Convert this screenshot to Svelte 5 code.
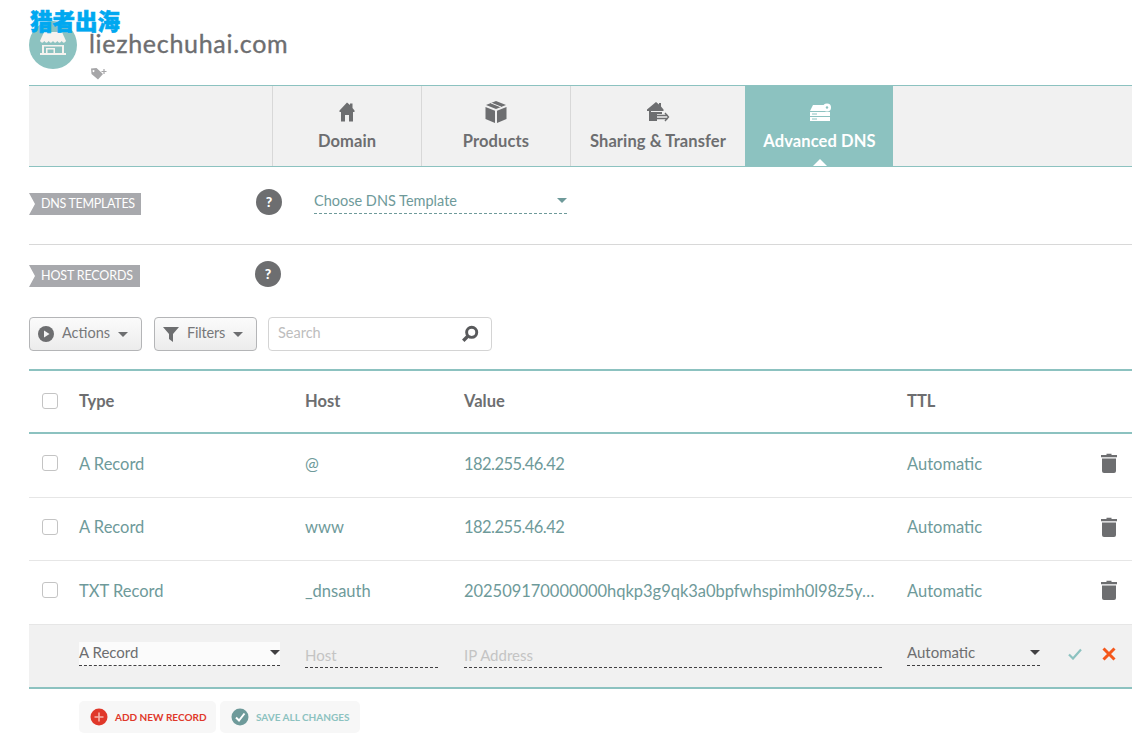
<script>
  const tabs = [
    { label: 'Domain', w: 149, icon: 'home' },
    { label: 'Products', w: 149, icon: 'box' },
    { label: 'Sharing & Transfer', w: 175, icon: 'share' },
    { label: 'Advanced DNS', w: 148, icon: 'dns', active: true }
  ];
  const rows = [
    { type: 'A Record', host: '@', value: '182.255.46.42', ip: true },
    { type: 'A Record', host: 'www', value: '182.255.46.42', ip: true },
    { type: 'TXT Record', host: '_dnsauth', value: '202509170000000hqkp3g9qk3a0bpfwhspimh0l98z5y…', ip: false }
  ];
</script>

<div class="page">
  <div class="brand">猎者出海</div>

  <header class="head">
    <div class="avatar">
      <svg viewBox="0 0 48 48" width="48" height="48">
        <path d="M15 11h18l4 9H11z" fill="#f6f3ef"/>
        <path d="M11 20q2.200 3.500 4.300 0q2.200 3.500 4.400 0q2.100 3.500 4.300 0q2.200 3.500 4.300 0q2.200 3.500 4.400 0q2.100 3.500 4.300 0z" fill="#f6f3ef"/>
        <path d="M13 24h22v8h2v2H11v-2h2zm2 1.500v6.500h2v-5h9v5h7v-6.500zm3.500 3v3.500h6v-3.500z" fill="#f6f3ef" fill-rule="evenodd"/>
      </svg>
    </div>
    <div class="title">
      <h1>liezhechuhai.com</h1>
      <svg class="tag" viewBox="0 0 18 13" width="18" height="13">
        <path fill-rule="evenodd" d="M1 1.500L6.500 1l6.500 6-5 5.500L1.500 7zM3.500 3a1 1 0 1 0 .01 0z" fill="#a6a6a8"/>
        <path d="M14 2v5M11.500 4.500h5" stroke="#a6a6a8" stroke-width="1.200"/>
      </svg>
    </div>
  </header>

  <nav class="tabs">
    {#each tabs as t}
      <div class="tab" class:active={t.active} style="width:{t.w}px">
        <svg viewBox="0 0 24 24" width="24" height="24">
          {#if t.icon === 'home'}
            <path d="M12 2.500l3 2.500V3.500h2.500V8l2 2.500V12H18v9.500h-4V15h-4v6.500H6V12H4.500v-1.500z" fill="#6d6e70"/>
          {:else if t.icon === 'box'}
            <path d="M12 1l10 4-10 4L2 5z M1.500 7l9.500 3.800V23l-9.500-4z M22.500 7L13 10.800V23l9.500-4z" fill="#6d6e70"/>
            <path d="M7 3l10 4" stroke="#f1f1f1" stroke-width="1"/>
          {:else if t.icon === 'share'}
            <path d="M10 2l3 2.500V3h2v3.500l2.500 3V11H5v10H3V11H1V9.500z M5 12h11v2h-5v7H5z" fill="#6d6e70"/>
            <path d="M11 15.500h11M11 18.500h11M19 13l3.500 4-3.500 4" stroke="#6d6e70" stroke-width="1.400" fill="none"/>
          {:else}
            <path d="M5 5h11l2 6H2z" fill="#fff"/>
            <circle cx="19" cy="7.500" r="4" fill="#fff"/>
            <circle cx="19" cy="7.500" r="1.200" fill="#8cc2c0"/>
            <rect x="2" y="12" width="20" height="4" fill="#fff"/>
            <rect x="2" y="17" width="20" height="4" fill="#fff"/>
            <path d="M4 14h5M4 19h5" stroke="#8cc2c0" stroke-width="1"/>
          {/if}
        </svg>
        <span>{t.label}</span>
      </div>
    {/each}
  </nav>

  <section class="band first">
    <div class="ribbon">DNS TEMPLATES</div>
    <div class="help">?</div>
    <div class="choose"><span>Choose DNS Template</span><i class="caret teal"></i></div>
  </section>

  <section class="band second">
    <div class="ribbon narrow">HOST RECORDS</div>
    <div class="help">?</div>
  </section>

  <div class="toolbar">
    <div class="btn actions">
      <svg viewBox="0 0 16 16" width="16" height="16"><circle cx="8" cy="8" r="8" fill="#6d6e70"/><path d="M6 4.500l5.500 3.500L6 11.500z" fill="#f4f4f4"/></svg>
      <span>Actions</span><i class="caret"></i>
    </div>
    <div class="btn filters">
      <svg viewBox="0 0 16 16" width="16" height="16"><path d="M0 1h16L10 8v8l-4-3V8z" fill="#6d6e70"/></svg>
      <span>Filters</span><i class="caret"></i>
    </div>
    <div class="search">
      <span>Search</span>
      <svg viewBox="0 0 16 16" width="18" height="18"><circle cx="9.500" cy="6.500" r="4.500" fill="none" stroke="#58595b" stroke-width="2.600"/><path d="M6 10l-4 4" stroke="#58595b" stroke-width="3"/></svg>
    </div>
  </div>

  <div class="table">
    <div class="row thead">
      <div class="c-check"><b class="box"></b></div>
      <div class="c-type">Type</div>
      <div class="c-host">Host</div>
      <div class="c-value">Value</div>
      <div class="c-ttl">TTL</div>
    </div>
    {#each rows as r}
      <div class="row item">
        <div class="c-check"><b class="box"></b></div>
        <div class="c-type">{r.type}</div>
        <div class="c-host">{r.host}</div>
        <div class="c-value" class:ip={r.ip} class:long={!r.ip}>{r.value}</div>
        <div class="c-ttl">Automatic</div>
        <svg class="trash" viewBox="0 0 16 20" width="16" height="20">
          <path d="M5.500 2V.8h5V2H16v2.200H0V2z" fill="#6d6e70"/>
          <path d="M1 5.500h14V18a2 2 0 0 1-2 2H3a2 2 0 0 1-2-2z" fill="#6d6e70"/>
        </svg>
      </div>
    {/each}
    <div class="row edit">
      <div class="c-check"></div>
      <div class="c-type"><div class="select light"><span>A Record</span><i class="caret dark"></i></div></div>
      <div class="c-host"><div class="input">Host</div></div>
      <div class="c-value"><div class="input">IP Address</div></div>
      <div class="c-ttl"><div class="select"><span>Automatic</span><i class="caret dark"></i></div></div>
      <svg class="ok" viewBox="0 0 14 12" width="14" height="12"><path d="M1 6.500l4 4 8-9" fill="none" stroke="#8cc2c0" stroke-width="2.200"/></svg>
      <svg class="no" viewBox="0 0 14 14" width="14" height="14"><path d="M1.500 1.500l11 11M12.500 1.500l-11 11" fill="none" stroke="#f4581c" stroke-width="3"/></svg>
    </div>
  </div>

  <div class="foot">
    <div class="act add">
      <svg viewBox="0 0 18 18" width="18" height="18"><circle cx="9" cy="9" r="8.500" fill="#e0382a"/><path d="M9 4.500v9M4.500 9h9" stroke="#f6b3aa" stroke-width="1.600"/></svg>
      <span>ADD NEW RECORD</span>
    </div>
    <div class="act save">
      <svg viewBox="0 0 18 18" width="18" height="18"><circle cx="9" cy="9" r="8.500" fill="#6e9a9a"/><path d="M5 9.500l3 3 5.500-7" fill="none" stroke="#fff" stroke-width="2"/></svg>
      <span>SAVE ALL CHANGES</span>
    </div>
  </div>
</div>

<style>
  :global(body) { margin: 0; background: #fff; }
  .page {
    position: relative;
    width: 1132px;
    height: 742px;
    overflow: hidden;
    box-sizing: border-box;
    padding-left: 29px;
    font-family: Lato, "Noto Sans", sans-serif;
    color: #6d6e70;
  }
  .brand {
    position: absolute;
    left: 30px;
    top: 8px;
    font: 900 22.500px/24px "Noto Sans CJK SC", sans-serif;
    color: #00a8f0;
    z-index: 2;
    -webkit-text-stroke: 0.6px #00a8f0;
  }
  .head {
    height: 85px;
    display: flex;
    padding-top: 21px;
    box-sizing: border-box;
  }
  .avatar {
    width: 48px;
    height: 48px;
    border-radius: 50%;
    background: #8cc2c0;
    margin-right: 12px;
  }
  .avatar svg { display: block; }
  .title h1 {
    margin: 8px 0 0;
    font-size: 25px;
    line-height: 28px;
    font-weight: 400;
    color: #6d6e70;
    letter-spacing: 0.7px;
    -webkit-text-stroke: 0.35px #6d6e70;
  }
  .tag { display: block; margin: 10px 0 0 1px; }
  .tabs {
    display: flex;
    height: 80px;
    padding-left: 243px;
    background: #f1f1f1;
    border-top: 1px solid #8cc2c0;
    border-bottom: 1px solid #8cc2c0;
  }
  .tab {
    position: relative;
    box-sizing: border-box;
    border-left: 1px solid #d8d8d8;
    display: flex;
    flex-direction: column;
    align-items: center;
    padding-top: 14px;
    font-size: 16.500px;
    font-weight: 700;
    color: #6d6e70;
  }
  .tab span { margin-top: 6px; line-height: 22px; letter-spacing: 0.1px; }
  .tab.active { background: #8cc2c0; color: #fff; border-left-color: #8cc2c0; }
  .tab.active::after {
    content: "";
    position: absolute;
    left: 50%;
    bottom: 0;
    margin-left: -7px;
    border: 7px solid transparent;
    border-top: 0;
    border-bottom-color: #fff;
  }
  .band { position: relative; display: flex; align-items: flex-start; }
  .first {
    height: 78px;
    padding-top: 22px;
    box-sizing: border-box;
    border-bottom: 1px solid #d8d8d8;
  }
  .second { height: 72px; padding-top: 16px; box-sizing: border-box; }
  .ribbon {
    width: 112px;
    height: 22px;
    margin-top: 4px;
    background: #a8a9ad;
    color: #fff;
    font-size: 12.500px;
    letter-spacing: -0.3px;
    line-height: 22px;
    box-sizing: border-box;
    padding-left: 12px;
    clip-path: polygon(0 0, 100% 0, 100% 100%, 0 100%, 6px 50%);
    white-space: nowrap;
  }
  .ribbon.narrow { width: 111px; letter-spacing: -0.15px; }
  .help {
    width: 26px;
    height: 26px;
    border-radius: 50%;
    background: #6d6e70;
    color: #fff;
    font-size: 14px;
    font-weight: 900;
    line-height: 26px;
    text-align: center;
    margin-left: 115px;
  }
  .choose {
    width: 253px;
    height: 25px;
    margin-left: 32px;
    box-sizing: border-box;
    border-bottom: 1px dashed #6e9a9a;
    display: flex;
    justify-content: space-between;
    align-items: center;
    padding-bottom: 2px;
    font-size: 14.500px;
    color: #6e9a9a;
  }
  .caret {
    display: block;
    width: 0;
    height: 0;
    border: 5px solid transparent;
    border-bottom: 0;
    border-top: 5px solid #6d6e70;
  }
  .caret.teal { border-top-color: #6e9a9a; }
  .caret.dark { border-top-color: #414042; }
  .toolbar { display: flex; height: 34px; }
  .btn {
    height: 34px;
    box-sizing: border-box;
    border: 1px solid #b4b5b7;
    border-radius: 4px;
    background: linear-gradient(#fbfbfb, #ececec);
    display: flex;
    align-items: center;
    padding-left: 8px;
    font-size: 14.500px;
    color: #77787a;
  }
  .btn span { margin: -3px 8px 0 8px; }
  .filters span { letter-spacing: -0.2px; }
  .actions { width: 113px; margin-right: 12px; }
  .filters { width: 103px; margin-right: 11px; }
  .search {
    width: 224px;
    height: 34px;
    box-sizing: border-box;
    border: 1px solid #d4d4d4;
    border-radius: 4px;
    display: flex;
    justify-content: space-between;
    align-items: center;
    padding: 0 12px 0 9px;
    font-size: 14.500px;
    color: #bdbdbd;
  }
  .search span { margin-top: -3px; }
  .table { margin-top: 18px; border-top: 2px solid #8cc2c0; }
  .row {
    position: relative;
    display: flex;
    align-items: center;
    box-sizing: border-box;
    border-bottom: 1px solid #e6e6e6;
    font-size: 16.500px;
    color: #6e9a9a;
  }
  .c-check { width: 50px; display: flex; padding-left: 13px; box-sizing: border-box; }
  .c-type { width: 226px; }
  .c-host { width: 159px; }
  .c-value { width: 443px; white-space: nowrap; box-sizing: border-box; }
  .c-value.ip { letter-spacing: -0.55px; }
  .c-value.long { letter-spacing: -0.03px; }
  .c-ttl { width: 133px; }
  .box {
    display: block;
    width: 16px;
    height: 16px;
    box-sizing: border-box;
    border: 1px solid #c4c4c4;
    border-radius: 3px;
    background: #fff;
  }
  .thead {
    height: 63px;
    padding-bottom: 2px;
    border-bottom: 2px solid #8cc2c0;
    font-weight: 700;
    font-size: 16.500px;
    color: #6d6e70;
  }
  .item { height: 64px; padding-bottom: 4px; }
  .item:nth-child(3) { height: 63px; }
  .item .c-check { margin-top: -1px; }
  .trash { position: absolute; left: 1072px; top: 19px; }
  .edit {
    height: 64px;
    background: #f1f1f1;
    border-bottom: 2px solid #8cc2c0;
    color: #6d6e70;
    font-size: 15px;
  }
  .select {
    width: 133px;
    height: 24px;
    box-sizing: border-box;
    border-bottom: 1px dashed #414042;
    display: flex;
    justify-content: space-between;
    align-items: center;
    margin-top: -4px;
    padding-bottom: 3px;
  }
  .select.light { width: 201px; background: #fbfbfb; }
  .input {
    height: 24px;
    box-sizing: border-box;
    border-bottom: 1px dashed #414042;
    color: #c4c4c4;
    line-height: 22px;
  }
  .c-host .input { width: 133px; }
  .c-value .input { width: 418px; }
  .ok { position: absolute; left: 1039px; top: 23px; }
  .no { position: absolute; left: 1073px; top: 22px; }
  .foot { display: flex; margin: 12px 0 0 50px; gap: 4px; }
  .act {
    height: 32px;
    display: flex;
    align-items: center;
    box-sizing: border-box;
    padding-left: 11px;
    background: #f7f7f7;
    border-radius: 5px;
    font-size: 10px;
    font-weight: 700;
  }
  .act span { margin: -1px 0 0 7px; }
  .add { width: 137px; color: #e0382a; }
  .save { width: 140px; color: #8cc2c0; }
</style>
